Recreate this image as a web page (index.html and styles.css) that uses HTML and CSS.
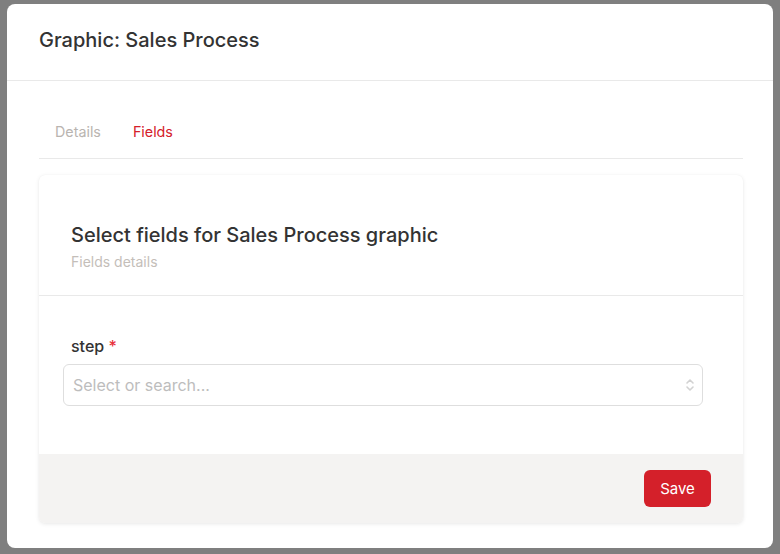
FILE: index.html
```html
<!DOCTYPE html>
<html>
<head>
<meta charset="utf-8">
<link rel="stylesheet" href="styles.css">
</head>
<body>
<div class="modal">
  <div class="modal-header">
    <h1 class="modal-title">Graphic: Sales Process</h1>
  </div>
  <div class="modal-body">
    <div class="tabs">
      <div class="tab">Details</div>
      <div class="tab active">Fields</div>
    </div>
    <div class="card">
      <div class="card-header">
        <h2 class="card-title">Select fields for Sales Process graphic</h2>
        <div class="card-subtitle">Fields details</div>
      </div>
      <div class="card-body">
        <label class="field-label">step <span class="req">*</span></label>
        <div class="select">
          <span class="placeholder">Select or search...</span>
          <svg class="chev" width="10" height="16" viewBox="0 0 10 16" fill="none" stroke="#d2d2d2" stroke-width="1.6" stroke-linecap="round" stroke-linejoin="round">
            <path d="M2 6 L5 3 L8 6"/>
            <path d="M2 10 L5 13 L8 10"/>
          </svg>
        </div>
      </div>
      <div class="card-footer">
        <button class="btn-save">Save</button>
      </div>
    </div>
  </div>
</div>
</body>
</html>
```
FILE: styles.css
```css
html, body {
  margin: 0;
  padding: 0;
}
body {
  background: #7f7f7f;
  font-family: Inter, "Noto Sans", sans-serif;
  width: 780px;
  height: 554px;
  overflow: hidden;
}
.modal {
  margin: 4px 7px 0 7px;
  width: 766px;
  height: 544px;
  background: #fff;
  border-radius: 8px;
  box-sizing: border-box;
}
.modal-header {
  height: 77px;
  box-sizing: border-box;
  border-bottom: 1px solid #e9e9e9;
  padding: 22px 32px 0 32px;
}
.modal-title {
  margin: 0;
  font-size: 20px;
  line-height: 28px;
  font-weight: 500;
  color: #333;
}
.modal-body {
  padding: 24px 30px 0 32px;
}
.tabs {
  display: flex;
  border-bottom: 1px solid #e9e9e9;
}
.tab {
  padding: 17px 16px 16px 16px;
  font-size: 14.3px;
  line-height: 20px;
  color: #b9b4b0;
}
.tab.active {
  color: #d4202a;
}
.card {
  margin-top: 16px;
  background: #fff;
  border-radius: 6px;
  box-shadow: 0 1px 4px rgba(0,0,0,0.09), 0 0 1px rgba(0,0,0,0.05);
  overflow: hidden;
}
.card-header {
  padding: 46px 32px 23px 32px;
  border-bottom: 1px solid #e9e9e9;
}
.card-title {
  margin: 0;
  font-size: 20px;
  line-height: 28px;
  font-weight: 500;
  color: #333;
}
.card-subtitle {
  margin-top: 3px;
  font-size: 14px;
  line-height: 20px;
  color: #c4beb9;
}
.card-body {
  padding: 40px 40px 48px 24px;
  display: flex;
  flex-direction: column;
}
.field-label {
  padding-left: 8px;
  font-size: 16px;
  line-height: 20px;
  font-weight: 500;
  color: #333;
}
.req {
  color: #e8303a;
}
.select {
  margin-top: 8px;
  height: 42px;
  box-sizing: border-box;
  border: 1px solid #dedede;
  border-radius: 6px;
  display: flex;
  align-items: center;
  justify-content: space-between;
  padding: 0 7px 0 9px;
}
.placeholder {
  font-size: 16px;
  color: #bdbdbd;
}
.chev {
  display: block;
}
.card-footer {
  background: #f4f3f2;
  padding: 16px 32px 16px 32px;
  display: flex;
  justify-content: flex-end;
}
.btn-save {
  font-family: Inter, "Noto Sans", sans-serif;
  background: #d4202a;
  color: #fff;
  border: none;
  border-radius: 6px;
  font-size: 15px;
  height: 37px;
  width: 67px;
  padding: 0;
}
```
